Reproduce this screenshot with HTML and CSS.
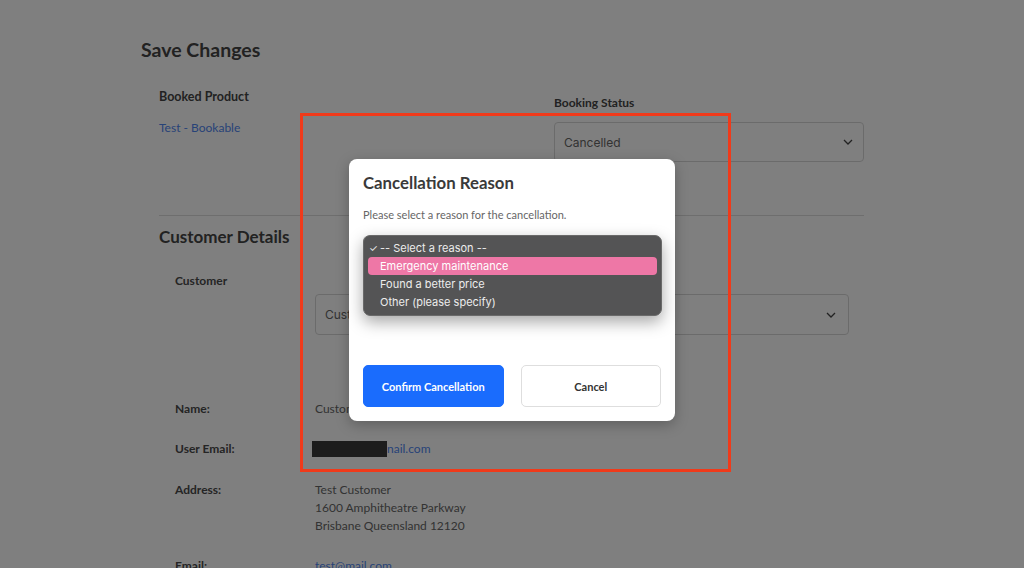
FILE: index.html
```html
<!DOCTYPE html>
<html lang="en">
<head>
<meta charset="utf-8">
<title>Save Changes</title>
<link rel="stylesheet" href="styles.css">
</head>
<body>
<div class="page">
  <h1 class="title">Save Changes</h1>
  <div class="inner">
    <div class="top-row">
      <div class="col-product">
        <div class="label">Booked Product</div>
        <a class="link product-link">Test - Bookable</a>
      </div>
      <div class="col-status">
        <div class="label status-label">Booking Status</div>
        <div class="select status-select">
          <span>Cancelled</span>
          <svg class="chev" width="10" height="6" viewBox="0 0 10 6"><polyline points="1,1 5,5 9,1" fill="none" stroke="#444" stroke-width="1.3"/></svg>
        </div>
      </div>
    </div>
    <div class="sep"></div>
    <h2 class="section-title">Customer Details</h2>
    <div class="details">
      <div class="customer-row">
        <div class="dlabel">Customer</div>
        <div class="select cust-select">
          <span>Customer Test</span>
          <svg class="chev" width="10" height="6" viewBox="0 0 10 6"><polyline points="1,1 5,5 9,1" fill="none" stroke="#444" stroke-width="1.3"/></svg>
        </div>
      </div>
      <div class="drow name-row">
        <div class="dlabel">Name:</div>
        <div class="val">Customer Test</div>
      </div>
      <div class="drow email-row">
        <div class="dlabel">User Email:</div>
        <div class="val"><span class="redact"></span><a class="link">nail.com</a></div>
      </div>
      <div class="drow addr-row">
        <div class="dlabel">Address:</div>
        <div class="val">Test Customer<br>1600 Amphitheatre Parkway<br>Brisbane Queensland 12120</div>
      </div>
      <div class="drow mail-row">
        <div class="dlabel">Email:</div>
        <div class="val"><a class="link">test@mail.com</a></div>
      </div>
    </div>
  </div>
</div>

<div class="overlay">
  <div class="modal">
    <h3 class="modal-title">Cancellation Reason</h3>
    <p class="modal-text">Please select a reason for the cancellation.</p>
    <div class="reason-wrap">
      <div class="reason-select"></div>
      <ul class="menu">
        <li class="opt checked"><span class="check">✓</span>-- Select a reason --</li>
        <li class="opt active">Emergency maintenance</li>
        <li class="opt">Found a better price</li>
        <li class="opt">Other (please specify)</li>
      </ul>
    </div>
    <div class="actions">
      <button class="btn btn-primary">Confirm Cancellation</button>
      <button class="btn btn-secondary">Cancel</button>
    </div>
  </div>
</div>

<div class="annot"></div>
</body>
</html>
```
FILE: styles.css
```css
* { box-sizing: border-box; }
html, body { margin: 0; padding: 0; }
body {
  width: 1024px;
  height: 568px;
  overflow: hidden;
  background: #fff;
  font-family: Lato, "Liberation Sans", sans-serif;
  color: #555;
  position: relative;
}
.page {
  width: 742px;
  margin: 0 auto;
  padding-top: 38px;
}
.title {
  margin: 0;
  font-size: 19.5px;
  line-height: 24px;
  font-weight: 700;
  color: #444;
}
.inner {
  padding-left: 18px;
}
.top-row {
  display: flex;
  margin-top: 27px;
}
.col-product { width: 395px; }
.label {
  font-size: 12.5px;
  line-height: 16px;
  font-weight: 700;
  color: #444;
}
.link {
  color: #4f86f0;
  text-decoration: none;
  font-size: 12px;
  line-height: 16px;
}
.product-link { display: block; margin-top: 15px; }
.col-status { padding-top: 6px; }
.status-label { font-size: 12px; }
.select {
  display: flex;
  align-items: center;
  justify-content: space-between;
  border: 1px solid #d6d6d6;
  border-radius: 4px;
  font-family: Inter, "Liberation Sans", sans-serif;
  font-size: 12px;
  color: #666;
}
.status-select {
  width: 310px;
  height: 40px;
  margin-top: 11px;
  padding: 0 10px 0 9px;
}
.cust-select {
  width: 534px;
  height: 41px;
  margin-top: 5px;
  padding: 0 12px 0 9px;
}
.sep {
  width: 705px;
  height: 1px;
  background: #dcdcdc;
  margin-top: 53px;
}
.section-title {
  margin: 10px 0 0;
  font-size: 17px;
  line-height: 22px;
  font-weight: 700;
  color: #444;
}
.details { padding-left: 16px; }
.customer-row {
  display: grid;
  grid-template-columns: 140px 1fr;
  margin-top: 25px;
}
.customer-row .select { grid-column: 2; }
.customer-row .dlabel { grid-column: 1 / span 2; }
.dlabel {
  font-size: 12px;
  line-height: 16px;
  font-weight: 700;
  color: #4a4a4a;
}
.drow {
  display: grid;
  grid-template-columns: 140px 1fr;
  font-size: 12px;
  line-height: 18px;
}
.drow .dlabel { line-height: 18px; }
.val { color: #666; }
.val .link { line-height: 18px; }
.name-row { margin-top: 65px; }
.email-row { margin-top: 22px; }
.addr-row { margin-top: 23px; }
.mail-row { margin-top: 22px; }
.redact {
  display: inline-block;
  width: 75px;
  height: 16px;
  background: #3a3a3a;
  vertical-align: -4px;
  margin-left: -3px;
}

.overlay {
  position: absolute;
  inset: 0;
  background: rgba(0, 0, 0, 0.5);
}
.modal {
  position: absolute;
  left: 349px;
  top: 159px;
  width: 326px;
  background: #fff;
  border-radius: 8px;
  box-shadow: 0 4px 14px rgba(0, 0, 0, 0.25);
  padding: 14px 14px 14px;
}
.modal-title {
  margin: 0;
  font-size: 16.8px;
  line-height: 20px;
  font-weight: 700;
  color: #3a3a3a;
}
.modal-text {
  margin: 15px 0 0;
  font-size: 11px;
  line-height: 14px;
  color: #666;
}
.reason-wrap {
  position: relative;
  margin-top: 14px;
  height: 32px;
}
.reason-select {
  height: 32px;
  border: 1px solid #ccc;
  border-radius: 4px;
}
.menu {
  position: absolute;
  left: 0;
  top: -1px;
  width: 299px;
  margin: 0;
  padding: 3px 4px 4px;
  list-style: none;
  background: rgba(78, 78, 80, 0.97);
  border: 1px solid #6a6a6a;
  border-radius: 7px;
  box-shadow: 0 6px 16px rgba(0, 0, 0, 0.35);
  font-family: Inter, "Liberation Sans", sans-serif;
  font-size: 11px;
  color: #ececec;
}
.opt {
  position: relative;
  height: 18px;
  line-height: 18px;
  padding-left: 12px;
  border-radius: 4px;
}
.opt.active {
  background: #ee77a6;
  color: #fff;
}
.check {
  position: absolute;
  left: 1px;
  top: 0;
  font-size: 10px;
}
.actions {
  display: flex;
  gap: 17px;
  margin-top: 97px;
}
.btn {
  flex: 1;
  height: 42px;
  border-radius: 5px;
  font-family: Lato, "Liberation Sans", sans-serif;
  font-size: 11px;
  font-weight: 700;
  cursor: pointer;
}
.btn-primary {
  background: #1a6cfd;
  border: 1px solid #1a6cfd;
  color: #fff;
}
.btn-secondary {
  background: #fff;
  border: 1px solid #dedede;
  color: #333;
}

.annot {
  position: absolute;
  left: 300px;
  top: 113px;
  width: 431px;
  height: 359px;
  border: 3px solid #f03a1a;
  pointer-events: none;
}
```
